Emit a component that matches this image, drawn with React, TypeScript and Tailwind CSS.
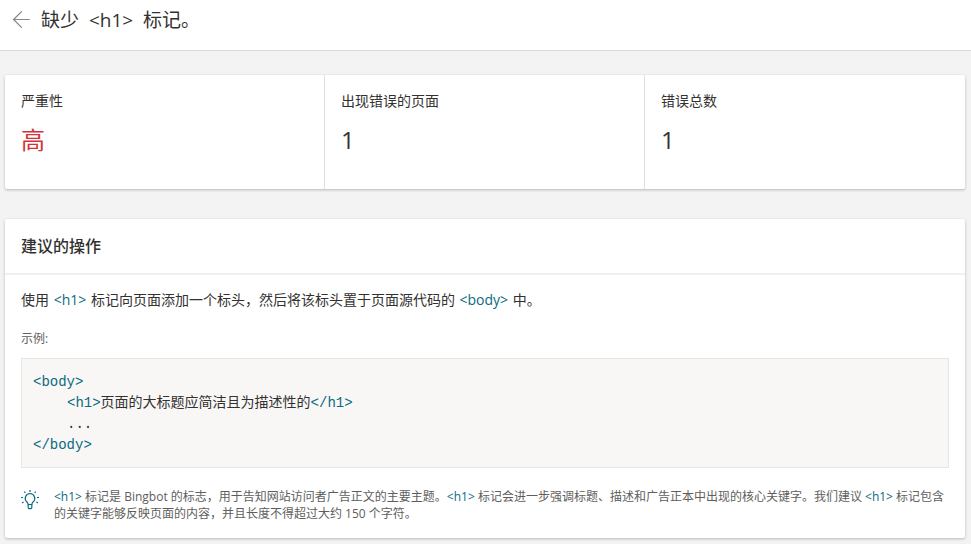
import React from 'react';
import { ArrowLeft } from 'lucide-react';

const sans = { fontFamily: '"Open Sans", "Noto Sans CJK SC", sans-serif' };

const Tag: React.FC<{ children: React.ReactNode }> = ({ children }) => (
  <span className="text-[#0b6b80]">{children}</span>
);

const Stat: React.FC<{ label: string; value: string; red?: boolean }> = ({ label, value, red }) => (
  <div className="w-[320px] pl-4 pt-[16px] border-r border-[#e1dfdd] last:border-r-0 h-full">
    <div className="text-[14px] leading-[20px] text-[#323130]">{label}</div>
    <div className={`mt-[13px] text-[24px] leading-[32px] ${red ? 'text-[#d13438]' : 'text-[#323130]'}`}>{value}</div>
  </div>
);

export default function App() {
  return (
    <div className="w-[971px] h-[544px] overflow-hidden bg-[#f3f3f3]" style={sans}>
      <header className="h-[51px] bg-white border-b border-[#d9d9d9] flex items-start pl-[8px] pt-[6px]">
        <ArrowLeft className="w-[27px] h-[27px] text-[#8a8886]" strokeWidth={1.1} />
        <h1 className="ml-[6px] text-[19px] leading-[28px] font-normal text-[#323130] [word-spacing:5px]">缺少 &lt;h1&gt; 标记。</h1>
      </header>

      <section className="ml-[5px] w-[960px] mt-[24px] h-[114px] bg-white rounded-[2px] shadow-[0_1px_3px_rgba(0,0,0,0.25)] flex">
        <Stat label="严重性" value="高" red />
        <Stat label="出现错误的页面" value="1" />
        <Stat label="错误总数" value="1" />
      </section>

      <section className="ml-[5px] w-[960px] mt-[30px] h-[319px] bg-white rounded-[2px] shadow-[0_1px_3px_rgba(0,0,0,0.25)]">
        <div className="h-[56px] border-b-2 border-[#f0f0f0] pl-4 pb-[1px] flex items-center">
          <h2 className="text-[16px] font-medium text-[#323130]">建议的操作</h2>
        </div>
        <div className="px-4">
          <p className="mt-[15px] text-[14px] leading-[20px] text-[#323130] [word-spacing:1px]">
            使用 <Tag>&lt;h1&gt;</Tag> 标记向页面添加一个标头，然后将该标头置于页面源代码的 <Tag>&lt;body&gt;</Tag> 中。
          </p>
          <div className="mt-[20px] text-[12px] leading-[18px] text-[#605e5c]">示例:</div>
          <pre
            className="mt-[10px] h-[110px] bg-[#f8f7f6] border border-[#e6e6e6] pl-[11px] pt-[13px] text-[14px] leading-[21px] text-[#323130]"
            style={{ fontFamily: '"Liberation Mono", "Noto Sans CJK SC", monospace' }}
          >
            <Tag>&lt;body&gt;</Tag>
            {'\n'}
            <span className="ml-[34px]"><Tag>&lt;h1&gt;</Tag>页面的大标题应简洁且为描述性的<Tag>&lt;/h1&gt;</Tag></span>
            {'\n'}
            <span className="ml-[34px]">...</span>
            {'\n'}
            <Tag>&lt;/body&gt;</Tag>
          </pre>
          <div className="mt-[20px] flex">
            <svg width="20" height="22" viewBox="0 0 20 22" fill="none" stroke="#0b6b80" strokeWidth="1.2" className="shrink-0 -ml-[1px] mt-[2px]">
              <path d="M10 3.5a4.8 4.8 0 0 0-3 8.5c.8.7 1 1.4 1.1 2.5h3.8c.1-1.1.3-1.8 1.1-2.5a4.8 4.8 0 0 0-3-8.5Z" />
              <path d="M8.2 14.5v3c0 .7.4 1.1 1 1.1h1.6c.6 0 1-.4 1-1.1v-3" />
              <path d="M10 0v2M4.2 1.5l1.2 1.5M15.8 1.5l-1.2 1.5M1 7.5h2M17 7.5h2M2 13l1.6-.9M18 13l-1.6-.9" />
            </svg>
            <p className="ml-[14px] w-[895px] text-[12px] leading-[17px] text-[#605e5c]">
              <Tag>&lt;h1&gt;</Tag> 标记是 Bingbot 的标志，用于告知网站访问者广告正文的主要主题。<Tag>&lt;h1&gt;</Tag> 标记会进一步强调标题、描述和广告正本中出现的核心关键字。我们建议 <Tag>&lt;h1&gt;</Tag> 标记包含的关键字能够反映页面的内容，并且长度不得超过大约 150 个字符。
            </p>
          </div>
        </div>
      </section>
    </div>
  );
}
